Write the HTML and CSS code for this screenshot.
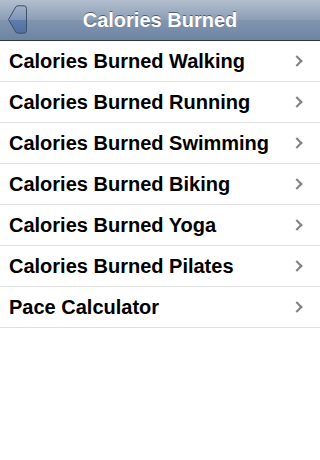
FILE: index.html
```html
<!DOCTYPE html>
<html>
<head>
<meta charset="utf-8">
<link rel="stylesheet" href="styles.css">
</head>
<body>
<div class="navbar">
  <div class="back">
    <svg width="21" height="30" viewBox="0 0 21 30">
      <defs>
        <linearGradient id="bg" x1="0" y1="0" x2="0" y2="1">
          <stop offset="0" stop-color="#9fb0c7"/>
          <stop offset="0.5" stop-color="#7f96b8"/>
          <stop offset="0.5" stop-color="#5f7eae"/>
          <stop offset="1" stop-color="#50709f"/>
        </linearGradient>
      </defs>
      <path d="M1.5 14.5 L9 1.5 Q10 0.8 12 0.8 L17 0.8 Q19.5 0.8 19.5 3.5 L19.5 25.5 Q19.5 28.2 17 28.2 L12 28.2 Q10 28.2 9 27.5 Z" fill="url(#bg)" stroke="#3e4f6a" stroke-width="1"/>
    </svg>
  </div>
  <div class="title">Calories Burned</div>
</div>
<ul class="list">
  <li class="row"><span class="label">Calories Burned Walking</span><span class="chev"></span></li>
  <li class="row"><span class="label">Calories Burned Running</span><span class="chev"></span></li>
  <li class="row"><span class="label">Calories Burned Swimming</span><span class="chev"></span></li>
  <li class="row"><span class="label">Calories Burned Biking</span><span class="chev"></span></li>
  <li class="row"><span class="label">Calories Burned Yoga</span><span class="chev"></span></li>
  <li class="row"><span class="label">Calories Burned Pilates</span><span class="chev"></span></li>
  <li class="row"><span class="label">Pace Calculator</span><span class="chev"></span></li>
</ul>
</body>
</html>
```
FILE: styles.css
```css
html, body {
  margin: 0;
  padding: 0;
  background: #ffffff;
  font-family: "Liberation Sans", Arial, sans-serif;
}
body {
  width: 320px;
  height: 460px;
  overflow: hidden;
}
.navbar {
  position: relative;
  height: 40px;
  border-bottom: 1px solid #2d3642;
  background: linear-gradient(to bottom, #b3bfcf 0%, #8b9db6 50%, #8195af 50%, #6d84a2 100%);
  display: flex;
  align-items: center;
  justify-content: center;
}
.back {
  position: absolute;
  left: 7px;
  top: 5px;
  height: 30px;
}
.back svg { display: block; }
.title {
  color: #ffffff;
  font-weight: bold;
  font-size: 20px;
  text-shadow: 0 -1px 0 rgba(0, 0, 0, 0.45);
}
.list {
  list-style: none;
  margin: 0;
  padding: 0;
}
.row {
  height: 40px;
  border-bottom: 1px solid #e0e0e0;
  display: flex;
  align-items: center;
  justify-content: space-between;
  padding: 0 19px 0 9px;
}
.label {
  font-weight: bold;
  font-size: 20px;
  color: #000000;
}
.chev {
  width: 6px;
  height: 6px;
  border-top: 2.5px solid #808080;
  border-right: 2.5px solid #808080;
  transform: rotate(45deg);
}
```
